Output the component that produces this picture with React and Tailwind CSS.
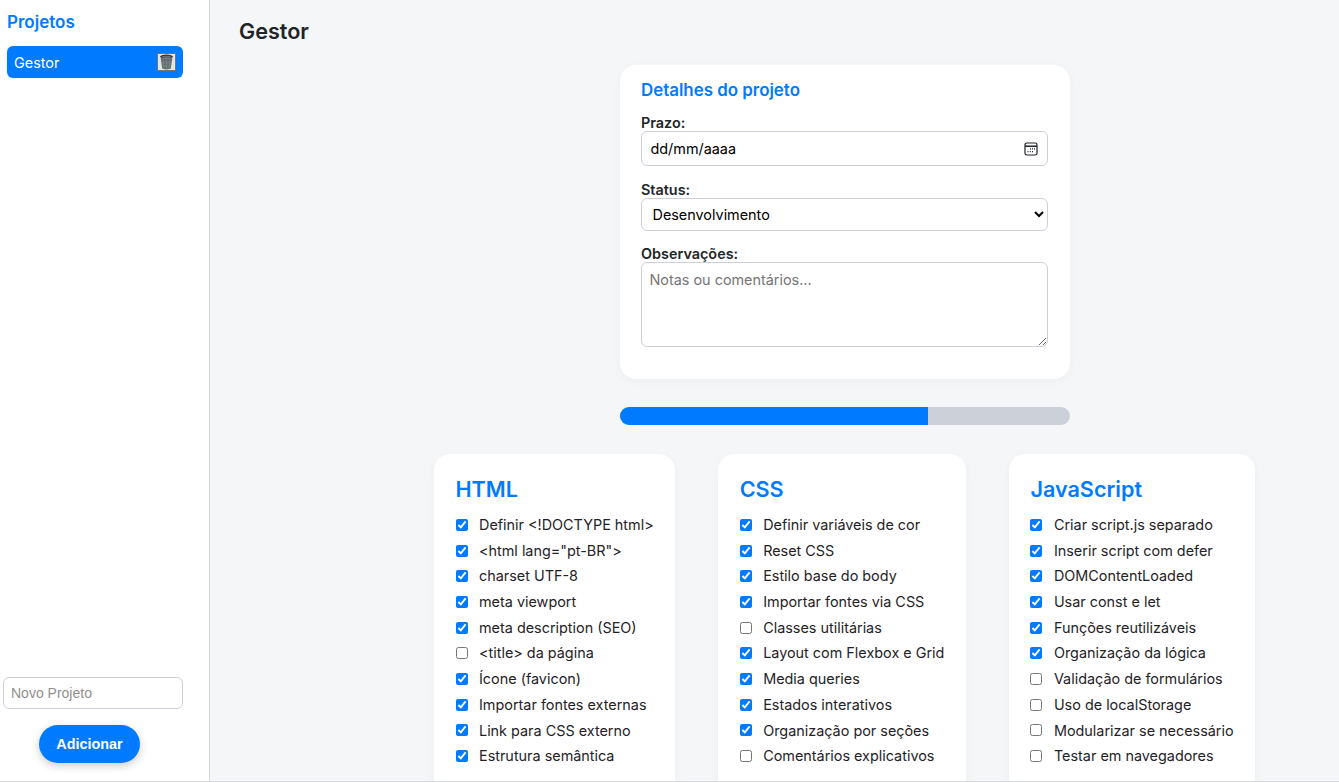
import { useState } from "react";

const groups = [
  {
    title: "HTML",
    items: [
      ["Definir <!DOCTYPE html>", true],
      ['<html lang="pt-BR">', true],
      ["charset UTF-8", true],
      ["meta viewport", true],
      ["meta description (SEO)", true],
      ["<title> da página", false],
      ["Ícone (favicon)", true],
      ["Importar fontes externas", true],
      ["Link para CSS externo", true],
      ["Estrutura semântica", true],
    ],
  },
  {
    title: "CSS",
    items: [
      ["Definir variáveis de cor", true],
      ["Reset CSS", true],
      ["Estilo base do body", true],
      ["Importar fontes via CSS", true],
      ["Classes utilitárias", false],
      ["Layout com Flexbox e Grid", true],
      ["Media queries", true],
      ["Estados interativos", true],
      ["Organização por seções", true],
      ["Comentários explicativos", false],
    ],
  },
  {
    title: "JavaScript",
    items: [
      ["Criar script.js separado", true],
      ["Inserir script com defer", true],
      ["DOMContentLoaded", true],
      ["Usar const e let", true],
      ["Funções reutilizáveis", true],
      ["Organização da lógica", true],
      ["Validação de formulários", false],
      ["Uso de localStorage", false],
      ["Modularizar se necessário", false],
      ["Testar em navegadores", false],
    ],
  },
];

function TrashIcon() {
  return (
    <svg width="15" height="16" viewBox="0 0 15 16">
      <ellipse cx="7.5" cy="2.6" rx="6.5" ry="2" fill="#34383b" />
      <ellipse cx="7.5" cy="2.8" rx="4.5" ry="1" fill="#6b7276" />
      <path d="M1.6 3.6 L3.2 14.6 Q7.5 16.4 11.8 14.6 L13.4 3.6 Q7.5 6 1.6 3.6 Z" fill="#636c71" />
      <path d="M4.2 6 L5 14.5 M7.5 6.2 V15 M10.8 6 L10 14.5 M3 9 H12 M3.4 12 H11.6" stroke="#7f888d" strokeWidth="0.7" />
    </svg>
  );
}

function CalendarIcon() {
  return (
    <svg width="14" height="14" viewBox="0 0 14 14" fill="none">
      <rect x="1" y="1" width="12" height="12" rx="1.8" stroke="#1f2328" strokeWidth="1.2" />
      <path d="M1 4.2 H13" stroke="#1f2328" strokeWidth="1.5" />
      <path d="M6 6.8 H7 M8 6.8 H9 M10 6.8 H11 M3.5 9.6 H4.5 M5.8 9.6 H6.8 M8 9.6 H9" stroke="#1f2328" strokeWidth="1.3" />
    </svg>
  );
}

function Group({ title, items }) {
  return (
    <section className="bg-white rounded-2xl px-[21.5px] pt-[20px] pb-8 shadow-[0_2px_8px_rgba(0,0,0,0.04)]">
      <h3 className="text-[21.6px] leading-[30px] font-semibold text-[#007bff] mb-[8px]">{title}</h3>
      <ul>
        {items.map(([label, done]) => (
          <li key={label} className="flex items-center h-[25.7px] text-[14.4px] text-[#1f2328] whitespace-nowrap">
            <input type="checkbox" defaultChecked={done} className="w-[12px] h-[12px] mr-[11.5px] accent-[#007bff]" />
            <span>{label}</span>
          </li>
        ))}
      </ul>
    </section>
  );
}

export default function App() {
  const [novo, setNovo] = useState("");

  return (
    <div className="h-[782px] flex overflow-hidden bg-[#f4f6f8] border-b border-[#d8dadd] font-['Inter',sans-serif]">
      {/* Sidebar */}
      <aside className="w-[210px] shrink-0 h-full bg-white border-r border-[#d4d7dc] flex flex-col">
        <h2 className="ml-[7px] mt-[11px] text-[17px] leading-[22px] font-semibold text-[#007bff]">Projetos</h2>
        <div className="ml-[7px] mt-[13px] w-[176px] h-[32px] rounded-md bg-[#007bff] text-white text-[14.4px] flex items-center justify-between pl-[7px] pr-[7px]">
          <span className="pt-[1px]">Gestor</span>
          <button className="w-[19px] h-[18px] bg-[#e4e4e4] border border-[#767676] flex items-center justify-center">
            <TrashIcon />
          </button>
        </div>
        <div className="mt-auto pb-[18px]">
          <input
            value={novo}
            onChange={(e) => setNovo(e.target.value)}
            placeholder="Novo Projeto"
            className="ml-[3px] w-[180px] h-[32px] px-[7px] bg-white border border-[#ccd1d9] rounded-md text-[14px] font-['Liberation_Sans',sans-serif] placeholder:text-[#8f8f8f] outline-none"
          />
          <button className="block ml-[39px] mt-[16px] w-[101px] h-[38px] pt-[1px] rounded-full bg-[#007bff] text-white text-[14.4px] font-bold font-['Liberation_Sans',sans-serif] shadow-[0_3px_8px_rgba(0,0,0,0.2)]">
            Adicionar
          </button>
        </div>
      </aside>

      {/* Main */}
      <main className="flex-1 min-w-0">
        <h1 className="ml-[29px] mt-[18px] text-[21.6px] leading-[27px] font-semibold text-[#212529]">Gestor</h1>

        <div className="ml-[224px] w-[821px] flex flex-col items-center">
          <div className="mt-[20px] w-[450px] h-[314px] bg-white rounded-2xl pl-[21px] pt-[14px] shadow-[0_2px_8px_rgba(0,0,0,0.04)]">
            <h2 className="pl-[0.5px] text-[16.9px] leading-[22px] font-semibold text-[#007bff] mb-[13px]">Detalhes do projeto</h2>

            <label className="block pl-[0.5px] text-[14.4px] leading-[17px] font-semibold text-[#212529]">Prazo:</label>
            <div className="w-[407px] h-[35px] border border-[#ccd1d9] rounded-md flex items-center justify-between pl-[9px] pr-[9px] text-[14.4px] text-black">
              <span>dd/mm/aaaa</span>
              <CalendarIcon />
            </div>

            <label className="block pl-[0.5px] mt-[15px] text-[14.4px] leading-[17px] font-semibold text-[#212529]">Status:</label>
            <select className="block w-[407px] h-[33px] bg-white border border-[#ccd1d9] rounded-md pl-[7px] text-[14.4px] text-black appearance-auto">
              <option>Desenvolvimento</option>
              <option>Concluído</option>
            </select>

            <label className="block pl-[0.5px] mt-[14px] text-[14.4px] leading-[17px] font-semibold text-[#212529]">Observações:</label>
            <textarea
              placeholder="Notas ou comentários..."
              className="block w-[407px] h-[85px] border border-[#ccd1d9] rounded-md px-2 py-1.5 text-[14.4px] placeholder:text-[#757575] outline-none"
            />
          </div>

          <div className="mt-[28px] w-[450px] h-[18px] rounded-full bg-[#ccd1d9] overflow-hidden">
            <div className="h-full bg-[#007bff]" style={{ width: "68.5%" }} />
          </div>

          <div className="mt-[29px] flex gap-[43px] w-full">
            {groups.map((g) => (
              <Group key={g.title} title={g.title} items={g.items} />
            ))}
          </div>
        </div>
      </main>
    </div>
  );
}
